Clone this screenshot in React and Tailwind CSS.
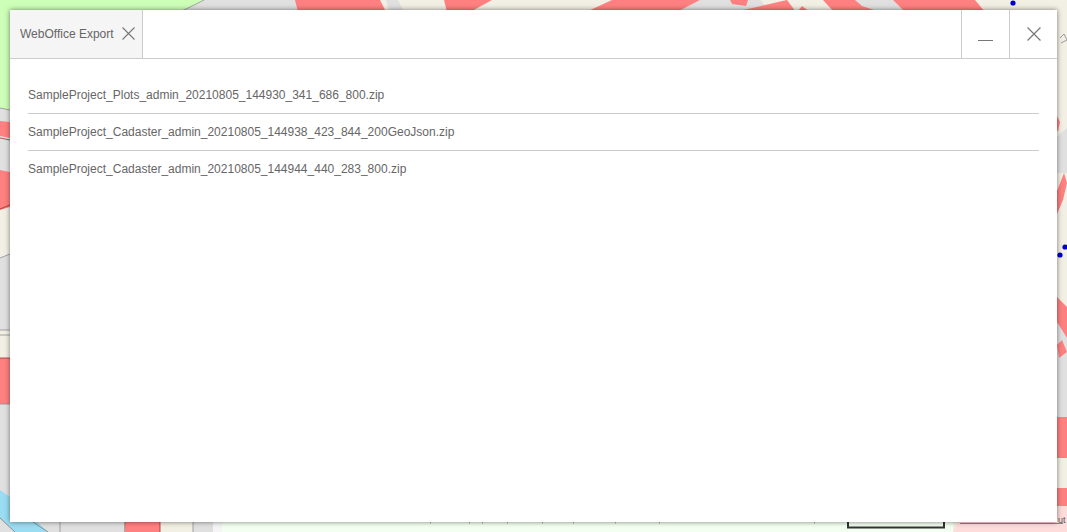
import React from "react";

const RED = "#ff8080";
const GRAY = "#e0e0e0";
const BEIGE = "#f2efe4";

// the map behind the dialog, only the edges of it can be seen
function MapBackground() {
  const reds = [
    "295,0 380,0 386,12 298,12",
    "447,12 444,0 492,0 470,12",
    "586,12 612,0 700,0 677,12",
    "730,0 748,0 746,6 732,4",
    "735,12 787,0 796,12",
    "797,12 802,6 810,12",
    "823,0 855,0 862,6 880,12 834,12",
    "893,0 975,0 985,12 905,12",
    "0,121 10,122 10,138 0,136",
    "0,170 10,172 10,207 0,210",
    "0,358 10,358 10,404 0,404",
    "125,520 160,520 160,532 126,532",
    "1057,116 1060,122 1058,131 1057,131",
    "1057,191 1064,173 1067,183 1063,200 1057,214",
    "1057,297 1067,307 1067,338 1057,322",
    "1057,345 1062,340 1067,352 1059,358",
    "1057,417 1067,417 1067,458 1057,458",
    "1057,488 1067,488 1067,506 1057,506",
  ];
  const grays = [
    "180,12 204,0 296,0 298,12",
    "386,0 398,0 404,12 390,12",
    "700,0 760,0 771,12 677,12",
    "855,0 893,0 905,12 862,12",
    "0,108 10,110 10,172 0,170",
    "0,258 10,254 10,330 0,330",
    "0,404 10,404 10,522 125,522 125,532 0,532",
    "193,520 213,520 213,532 193,532",
    "1057,137 1067,128 1067,173 1057,173",
    "1057,322 1067,338 1067,417 1057,417",
  ];
  const ticks = [430, 469, 482, 507, 542, 573, 615, 659, 814];

  return (
    <svg className="absolute inset-0" width="1067" height="532" viewBox="0 0 1067 532">
      <rect width="1067" height="532" fill={BEIGE} />
      <polygon points="0,0 204,0 180,12 12,110 0,108" fill="#ceffb9" />
      {grays.map((p) => (
        <polygon key={p} points={p} fill={GRAY} />
      ))}
      {reds.map((p) => (
        <polygon key={p} points={p} fill={RED} />
      ))}
      <path d="M0 138L10 140M0 209L10 205M0 358H10M125 522V532M160 522V532" stroke="#a03030" strokeWidth="0.8" />
      <path d="M180 12L204 0M0 108L10 110M0 258L10 254M0 330H10M0 335H10M0 404H10M60 522V532M193 522V532" stroke="#909090" strokeWidth="0.8" />
      <polygon points="0,490 10,497 48,532 15,532 0,518" fill="#9adcf2" />
      <path d="M0 518L15 532M33 522L48 532" stroke="#808080" strokeWidth="0.8" />
      <rect x="213" y="522" width="9" height="10" fill="#f5f5f5" />
      <rect x="222" y="522" width="731" height="10" fill="#f3fff0" />
      <polygon points="953,532 958,522 1057,522 1057,506 1067,506 1067,532" fill="#ffdcdc" />
      {ticks.map((x) => (
        <rect key={x} x={x} y="522" width="1" height="1.5" fill="#aaaaaa" />
      ))}
      <rect x="848" y="516" width="96" height="11.5" fill="none" stroke="#333333" strokeWidth="2" />
      <rect x="960" y="523" width="103" height="1" fill="#888888" />
      <circle cx="1013" cy="3" r="2.6" fill="#0000c8" />
      <circle cx="1065" cy="247" r="2.6" fill="#0000c8" />
      <circle cx="1060" cy="255" r="2.6" fill="#0000c8" />
      <path d="M1060 38l4-4 3 6-6 3" fill="none" stroke="#999999" />
      <text x="1058" y="523" fontSize="9" fill="#555555" fontFamily="Liberation Sans, sans-serif">ut</text>
    </svg>
  );
}

function CrossIcon({ size }) {
  return (
    <svg width={size} height={size} viewBox="0 0 13 13" fill="none" stroke="#777777" strokeWidth="1.1">
      <path d="M0.5 0.5L12.5 12.5M12.5 0.5L0.5 12.5" />
    </svg>
  );
}

const files = [
  "SampleProject_Plots_admin_20210805_144930_341_686_800.zip",
  "SampleProject_Cadaster_admin_20210805_144938_423_844_200GeoJson.zip",
  "SampleProject_Cadaster_admin_20210805_144944_440_283_800.zip",
];

export default function App() {
  return (
    <div className="relative h-[532px] overflow-hidden p-[10px] font-['Liberation_Sans',Arial,sans-serif] text-xs text-[#666666]">
      <MapBackground />
      <div className="relative flex h-full flex-col bg-white shadow-[0_0_5px_rgba(0,0,0,0.5)]">
        <div className="flex h-[49px] shrink-0 border-b border-[#cccccc]">
          <div className="flex w-[133px] items-center border-r border-[#cccccc] bg-[#f5f5f5] pl-[10px]">
            <span>WebOffice Export</span>
            <span className="ml-[8px] mt-[-1px]">
              <CrossIcon size={13} />
            </span>
          </div>
          <div className="flex-1" />
          <div className="flex w-[48px] items-end justify-center border-l border-[#cccccc] pb-[17px]">
            <div className="h-px w-[15px] bg-[#777777]" />
          </div>
          <div className="flex w-[48px] items-center justify-center border-l border-[#cccccc]">
            <CrossIcon size={14} />
          </div>
        </div>
        <div className="px-[18px] pt-[18px]">
          {files.map((name, i) => (
            <div
              key={name}
              className={
                i < files.length - 1
                  ? "flex h-[37px] items-start border-b border-[#cccccc] pt-[11px] leading-[15px]"
                  : "flex h-[37px] items-start pt-[11px] leading-[15px]"
              }
            >
              {name}
            </div>
          ))}
        </div>
      </div>
    </div>
  );
}
